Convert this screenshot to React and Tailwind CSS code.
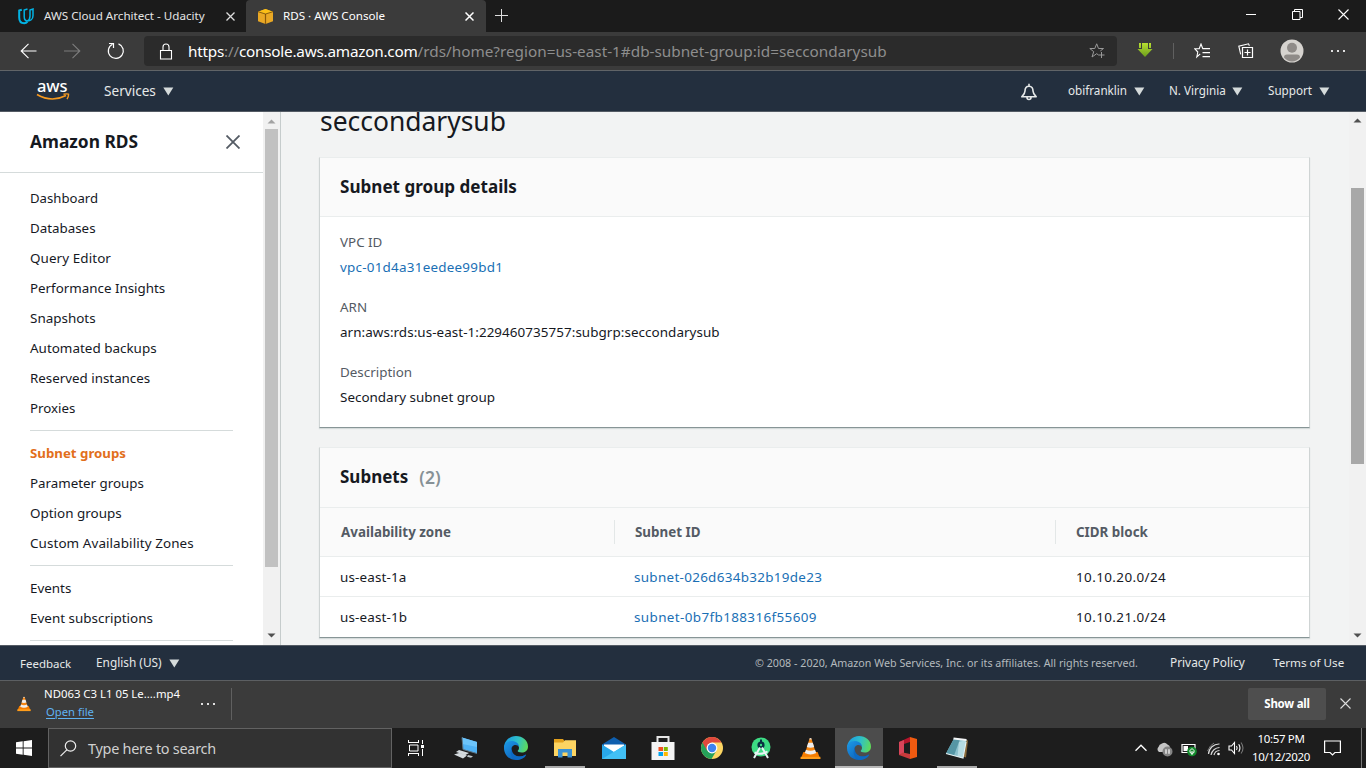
import React from 'react';

function Svg({ w, h, className = '', children }) {
  return (
    <svg width={w} height={h} viewBox={`0 0 ${w} ${h}`} fill="none" className={`block shrink-0 ${className}`}>
      {children}
    </svg>
  );
}

const Caret = ({ className = '' }) => (
  <Svg w={11} h={9} className={className}>
    <path d="M0.3 0.5h10L5.3 8.6z" fill="#d5dbdb" />
  </Svg>
);

const Cross = ({ s = 9, color = '#fff', sw = 1.3, className = '' }) => (
  <Svg w={s} h={s} className={className}>
    <path d={`M.5 .5L${s - 0.5} ${s - 0.5}M${s - 0.5} .5L.5 ${s - 0.5}`} stroke={color} strokeWidth={sw} />
  </Svg>
);

const Dots = ({ className = '' }) => (
  <Svg w={16} h={2} className={className}>
    <path d="M1 0h2v2H1zM7 0h2v2H7zM13 0h2v2h-2z" fill="#e0e0e0" />
  </Svg>
);

const Edge = ({ id }) => (
  <Svg w={26} h={26}>
    <defs>
      <linearGradient id={`${id}a`} x1="2" y1="6" x2="25" y2="13" gradientUnits="userSpaceOnUse">
        <stop offset="0" stopColor="#1b9de2" />
        <stop offset=".5" stopColor="#2fc0c8" />
        <stop offset="1" stopColor="#62dc52" />
      </linearGradient>
      <linearGradient id={`${id}b`} x1="3" y1="10" x2="16" y2="25" gradientUnits="userSpaceOnUse">
        <stop offset="0" stopColor="#1a8fdf" />
        <stop offset="1" stopColor="#0c5cb5" />
      </linearGradient>
    </defs>
    <path d="M1 13C1 6 6.500 1 13 1s12 4.500 12 10.500c0 4-3 6-6.300 6-2.700 0-4-.8-4-1.500 0-.7 1.300-1 1.300-3 0-2.500-2-4.500-5-4.500-4 0-8 1.500-10 4.500z" fill={`url(#${id}a)`} />
    <path d="M1 13c0-4 3.500-7 7.500-7 4.500 0 7.500 2.500 7.500 6-1-2-5-3-7 0-2.500 4 1 9.500 7 9.500 3 0 5-1 6.500-2C21 22.500 17.500 25 13 25 6.300 25 1 20 1 13z" fill={`url(#${id}b)`} />
    <path d="M9.500 11c-2.300 4.500 1 10.500 7 10.500 2.500 0 4.500-.8 6-1.800.5-.3.800 0 .5.600C21.500 23 18 25 14.500 25 8.500 24 5.500 18 9.500 11z" fill="#0d6ac4" />
  </Svg>
);

const Cone = ({ w = 22 }) => (
  <svg width={w} height={w * 1.08} viewBox="0 0 22 24" className="block shrink-0">
    <path d="M3.500 16h15l3 7.500H.5z" fill="#f57c00" />
    <path d="M.5 21h21v3H.5z" fill="#ff9d1b" />
    <path d="M10 1.500h2L17 18q-6 3-12 0z" fill="#f58511" />
    <path d="M8.600 6h4.800l1.500 4.500q-4 1.500-7.800 0zM6.200 13.500q4.800 2 9.600 0l1.200 3.500q-6 3-12 0z" fill="#eee" />
    <path d="M10 1.500q1-1 2 0l.4 1.200H9.700z" fill="#e5e5e5" />
  </svg>
);

function BrowserTabs() {
  return (
    <div className="flex h-8 bg-[#1b1b1b] text-[11.620px] leading-8 text-[#e4e4e4]">
      <div className="flex w-[246px] items-center">
        <Svg w={17} h={17} className="ml-[18px]">
          <path d="M3.800 1.800L1.200 2.500v7c0 3.500 2 5.700 5 5.700 1.500 0 2.500-.5 3.300-1.500" stroke="#02b3e4" strokeWidth="2" />
          <path d="M9.500 1L6.200 2v6.500c0 3 1.200 4.500 3.500 4.500s5.300-1.500 5.300-5.500V1l-3 1v6c0 2.500-.8 4-2.500 5" stroke="#02b3e4" strokeWidth="1.500" />
        </Svg>
        <span className="ml-[9px] w-[182px] whitespace-nowrap">AWS Cloud Architect - Udacity</span>
        <Cross color="#ddd" />
      </div>
      <div className="flex w-[240px] items-center rounded-t bg-[#3b3b3b] text-white">
        <Svg w={15} h={15} className="ml-[12px]">
          <path d="M0 2.700L7.500 0 15 2.700v9.600L7.500 15 0 12.300z" fill="#e9a825" />
          <path d="M0 2.700L7.500 0 15 2.700 7.500 5z" fill="#fbbf17" />
          <path d="M7.500 5v10" stroke="#8b5a0a" strokeWidth="1.200" />
          <path d="M0 2.700L7.500 5 15 2.700" stroke="#6d480d" strokeWidth=".8" />
        </Svg>
        <span className="ml-[10px] w-[182px] whitespace-nowrap">RDS · AWS Console</span>
        <Cross sw={1.5} />
      </div>
      <div className="flex w-[752px] items-center pb-px pl-[9px]">
        <Svg w={14} h={14}>
          <path d="M0 6.500h13M6.500 0v13" stroke="#ddd" />
        </Svg>
      </div>
      <div className="flex items-center pb-1">
        <Svg w={10} h={10} className="ml-[8px]">
          <path d="M0 5.500h10" stroke="#fff" />
        </Svg>
        <Svg w={11} h={11} className="ml-[36px]">
          <path d="M.5 2.500h7.500v8H.5zM2.500 2.500V.5h8v8H8" stroke="#fff" />
        </Svg>
        <Cross s={11} sw={1.1} className="ml-[35px]" />
      </div>
    </div>
  );
}

function Toolbar() {
  return (
    <div className="flex h-[38px] items-center bg-[#3b3b3b]">
      <Svg w={17} h={16} className="-mt-px ml-[20px]">
        <path d="M16.500 8H1M8.500.8L1.200 8l7.300 7.200" stroke="#fff" strokeWidth="1.100" />
      </Svg>
      <Svg w={17} h={16} className="-mt-px ml-[27px]">
        <path d="M0 8h15.500M8.500.8L15.800 8l-7.300 7.200" stroke="#7d7d7d" strokeWidth="1.100" />
      </Svg>
      <Svg w={18} h={18} className="ml-[26px]">
        <path d="M5.500 2.200A7.500 7.500 0 1 0 11.500 1.900" stroke="#fff" strokeWidth="1.200" />
        <path d="M2 1.500h4.500V6" stroke="#fff" strokeWidth="1.200" />
      </Svg>
      <div className="ml-[19px] flex h-[30px] w-[973px] items-center rounded bg-[#2b2b2b]">
        <Svg w={14} h={17} className="ml-[15px]">
          <path d="M1.500 7.500h11v8.500h-11zM4 7.500V4a3 3 0 0 1 6 0v3.500" stroke="#fff" strokeWidth="1.100" />
        </Svg>
        <div className="ml-[15px] flex w-[901px] whitespace-nowrap text-[15.300px] text-[#8e8e8e]">
          <span className="tracking-[-0.230px] text-white">
            https<span className="text-[#8e8e8e]">://</span>console.aws.amazon.com
          </span>
          <span>/rds/home?region=us-east-1#db-subnet-group:id=seccondarysub</span>
        </div>
        <Svg w={17} h={16}>
          <path d="M9.500 12L7.700 10.700 3 14l1.700-5.300L.8 5.500h5L7.700.8l1.800 4.700h5L11.300 8" stroke="#999" />
          <path d="M12.500 9v6M9.500 12h6" stroke="#999" />
        </Svg>
      </div>
      <Svg w={16} h={17} className="ml-[20px] -mt-[1px]">
        <defs>
          <linearGradient id="dl" x1="0" y1="0" x2="0" y2="1">
            <stop offset="0" stopColor="#b8df32" />
            <stop offset="1" stopColor="#6b9d1c" />
          </linearGradient>
        </defs>
        <path d="M2 1h2v5H2zM5 1h6v6h4.500L8 15 .5 7H5zM12 1h2v5h-2z" fill="url(#dl)" />
      </Svg>
      <div className="ml-[20px] h-4 w-px bg-[#606060]" />
      <Svg w={16} h={16} className="ml-[20px]">
        <path d="M6.200 10.800L2.800 14l1-5L.7 5.700h4.500L7 1l1.800 4.700" stroke="#fff" strokeWidth="1.100" />
        <path d="M8.500 5.600H16M8.500 9.600H16M8.500 13.600H16" stroke="#fff" strokeWidth="1.100" />
      </Svg>
      <Svg w={16} h={16} className="ml-[28px]">
        <path d="M4.500 4.500h10v10h-10zM9.500 6.500v6M6.500 9.500h6" stroke="#fff" strokeWidth="1.200" />
        <path d="M2.700 11.300L.8 3.200 10.500.8l.9 2" stroke="#fff" strokeWidth="1.100" />
      </Svg>
      <Svg w={24} h={24} className="ml-[26px]">
        <circle cx="12" cy="12" r="11.500" fill="#d6d3cf" />
        <circle cx="12" cy="8.800" r="5" fill="#8f8b88" />
        <path d="M4 18.500q0-3 3-3h10q3 0 3 3-3.500 4-8 4t-8-4z" fill="#8f8b88" />
      </Svg>
      <Dots className="ml-[26px]" />
    </div>
  );
}

function AwsNav() {
  return (
    <div className="flex h-[42px] items-center border-t border-b border-t-[#606467] border-b-[#545b64] bg-[#232f3e] text-[11.680px] text-[#e6e9e9]">
      <div className="ml-[36px] flex w-[68px] flex-col">
        <span className="ml-[1px] h-[12px] text-[16.500px] leading-[9px] font-medium tracking-[-0.100px] text-white">aws</span>
        <Svg w={34} h={8}>
          <path d="M1 1.500q14.500 8.500 29 1" stroke="#f79a20" strokeWidth="1.700" />
          <path d="M27.500 1.300q3-.8 5-.2.300 2.500-1.500 5" stroke="#f79a20" strokeWidth="1.400" />
        </Svg>
      </div>
      <span className="w-[59px] text-[13.600px]">Services</span>
      <Caret />
      <Svg w={18} h={18} className="ml-[846px] mt-[2px]">
        <path d="M9 3.200C6 3.200 5 5.500 5 8c0 2.500-1.500 4-3.200 5.800h14.400C14.500 12 13 10.500 13 8c0-2.500-1-4.800-4-4.800zM9 3V.8M7 14.500q0 2 2 2t2-2" stroke="#e6e9e9" strokeWidth="1.600" strokeLinejoin="round" />
      </Svg>
      <span className="ml-[30px] w-[66px]">obifranklin</span>
      <Caret />
      <span className="ml-[24px] w-[63px]">N. Virginia</span>
      <Caret />
      <span className="ml-[25px] w-[51px]">Support</span>
      <Caret />
    </div>
  );
}

const nav = [
  ['Dashboard', 'text-[13.150px]'],
  ['Databases', 'text-[13.350px]'],
  ['Query Editor', 'text-[13.450px] tracking-[0.080px]'],
  ['Performance Insights', 'text-[13.350px]'],
  ['Snapshots', 'text-[13.450px]'],
  ['Automated backups', 'text-[13.450px]'],
  ['Reserved instances', 'text-[13.350px]'],
  ['Proxies', 'text-[13.300px]'],
  null,
  ['Subnet groups', 'text-[13.260px] font-bold text-[#e26f1c]'],
  ['Parameter groups', 'text-[13.330px]'],
  ['Option groups', 'text-[13.450px]'],
  ['Custom Availability Zones', 'text-[13.450px] tracking-[0.080px]'],
  null,
  ['Events', 'text-[13.400px]'],
  ['Event subscriptions', 'text-[13.450px]'],
  null,
];

function ScrollArrow({ up, color = '#505050' }) {
  return (
    <Svg w={9} h={5}>
      <path d={up ? 'M.5 4.500L4.500 .5l4 4z' : 'M.5 .5h8l-4 4z'} fill={color} />
    </Svg>
  );
}

function Sidebar() {
  return (
    <div className="flex w-[281px] shrink-0 border-r border-[#c6cccc] bg-white">
      <div className="w-[263px] overflow-hidden">
        <div className="flex h-[61px] items-center border-b border-[#d5dbdb] pl-[30px]">
          <span className="w-[196px] text-[17.330px] font-bold">Amazon RDS</span>
          <Cross s={14} color="#545b64" sw={1.8} />
        </div>
        <div className="pt-[10px] pl-[30px]">
          {nav.map((n, i) =>
            n ? (
              <div key={i} className={`h-[30px] leading-[30px] ${n[1]}`}>
                {n[0]}
              </div>
            ) : (
              <div key={i} className="my-[7px] h-px w-[203px] bg-[#d5dbdb]" />
            )
          )}
        </div>
      </div>
      <div className="flex w-[17px] flex-col items-center justify-between bg-[#f1f1f1] pb-[7px]">
        <div className="flex flex-col items-center gap-[5px] pt-[7px]">
          <ScrollArrow up color="#a3a3a3" />
          <div className="h-[438px] w-[13px] bg-[#c1c1c1]" />
        </div>
        <ScrollArrow />
      </div>
    </div>
  );
}

const card = 'w-[991px] border border-t-[#eaeded] border-r-[#cfd4d4] border-b-[#879596] border-l-[#cfd4d4] bg-white shadow-[0_1px_1px_#d5dbdb]';

function Details() {
  const items = [
    ['VPC ID', 'vpc-01d4a31eedee99bd1', 'text-[13.450px] tracking-[0.230px] text-[#1a6fb5]'],
    ['ARN', 'arn:aws:rds:us-east-1:229460735757:subgrp:seccondarysub', 'text-[13.450px] tracking-[0.050px]'],
    ['Description', 'Secondary subnet group', 'text-[13.440px]'],
  ];
  return (
    <div className={`${card} h-[271px]`}>
      <div className="h-[59px] border-b border-[#eaeded] bg-[#fafafa] pl-5 text-[17.080px] leading-[58px] font-bold">Subnet group details</div>
      <div className="flex flex-col gap-[15px] pt-[12px] pl-5">
        {items.map(([k, v, c]) => (
          <div key={k} className="flex h-[50px] flex-col">
            <span className="text-[13.400px] leading-[26px] text-[#545b64]">{k}</span>
            <span className={`leading-[24px] ${c}`}>{v}</span>
          </div>
        ))}
      </div>
    </div>
  );
}

function Subnets() {
  const rows = [
    ['us-east-1a', 'subnet-026d634b32b19de23', '10.10.20.0/24'],
    ['us-east-1b', 'subnet-0b7fb188316f55609', '10.10.21.0/24'],
  ];
  return (
    <div className={`${card} h-[191px]`}>
      <div className="flex h-[60px] gap-[11px] border-b border-[#eaeded] bg-[#fafafa] pl-5 text-[17px] leading-[58px] font-bold">
        <span>Subnets</span>
        <span className="text-[17.500px] font-semibold text-[#879196]">(2)</span>
      </div>
      <div className="flex h-[49px] items-center border-b border-[#eaeded] bg-[#fafafa] text-[13.380px] font-bold text-[#545b64]">
        <div className="w-[295px] border-r border-[#e3e7e7] pl-[21px] leading-6">Availability zone</div>
        <div className="w-[441px] border-r border-[#e3e7e7] pl-5 leading-6">Subnet ID</div>
        <div className="pl-5">CIDR block</div>
      </div>
      {rows.map((r, i) => (
        <div key={r[0]} className={i ? 'flex h-10 leading-[40px]' : 'flex h-10 border-b border-[#eaeded] leading-[40px]'}>
          <span className="w-[294px] pl-5 text-[13.450px] tracking-[0.150px]">{r[0]}</span>
          <span className={i ? 'w-[442px] pl-5 text-[13.450px] tracking-[0.380px] text-[#1a6fb5]' : 'w-[442px] pl-5 text-[13.450px] tracking-[0.300px] text-[#1a6fb5]'}>{r[1]}</span>
          <span className="pl-5 text-[13.450px] tracking-[0.400px]">{r[2]}</span>
        </div>
      ))}
    </div>
  );
}

function ConsoleFooter() {
  return (
    <div className="flex h-9 items-center border-t border-b border-t-[#545b64] border-b-[#5c5f62] bg-[#232f3e] text-[11.850px] whitespace-nowrap text-[#e6e9e9]">
      <span className="ml-5 w-[76px] pt-px text-[11.480px]">Feedback</span>
      <span className="w-[73px]">English (US)</span>
      <Caret />
      <span className="ml-[575px] w-[415px] text-[10.730px] text-[#b4babd]">
        © 2008 - 2020, Amazon Web Services, Inc. or its affiliates. All rights reserved.
      </span>
      <span className="w-[103px]">Privacy Policy</span>
      <span className="text-[11.650px]">Terms of Use</span>
    </div>
  );
}

function Downloads() {
  return (
    <div className="flex h-[47px] items-center bg-[#3b3b3b] pb-[2px] text-white">
      <div className="ml-[17px] flex w-[27px] items-center pt-px">
        <Cone w={14} />
      </div>
      <div className="flex w-[156px] flex-col pb-[2px] whitespace-nowrap">
        <span className="text-[11.370px] leading-[18px]">ND063 C3 L1 05 Le....mp4</span>
        <span className="ml-[2px] text-[11.260px] leading-[18px] text-[#5fb2f2] underline underline-offset-2">Open file</span>
      </div>
      <Dots />
      <div className="ml-[15px] h-8 w-px bg-[#606060]" />
      <div className="ml-[1016px] h-8 w-[78px] rounded-[2px] bg-[#4e4e4e] text-center text-[11.500px] leading-8 font-bold tracking-[-0.250px]">Show all</div>
      <Cross s={11} color="#ddd" sw={1.1} className="ml-[14px]" />
    </div>
  );
}

const apps = [
  { icon: (
    <Svg w={26} h={26}>
      <path d="M8 2.500l15 4.500v11.500L9 14.500z" fill="#4fb2f5" />
      <path d="M8 2.500l15 4.500v5L8.500 9z" fill="#6cc4fb" />
      <path d="M8 2.500L9 14.500l14 4" stroke="#5c7384" />
      <path d="M5 15l10 3-3.500 2L2 17zM0 19.500l5-1.500 8 2.500-4 3z" fill="#d4dade" />
      <path d="M14 20l5 1.300-2 1.500-4-1z" fill="#bac3c8" />
    </Svg>
  ) },
  { icon: <Edge id="e1" /> },
  { bar: 'w-10 bg-[#aaa]', icon: (
    <Svg w={22} h={20}>
      <path d="M0 1h9l1.500 2H22v15H0z" fill="#e2a01c" />
      <path d="M0 4.500h9l2-2.300h11V18H0z" fill="#fcd462" />
      <path d="M4 19.500V11h14v8.500h-4.500v-5h-5v5z" fill="#3a92d4" />
    </Svg>
  ) },
  { icon: (
    <Svg w={24} h={24}>
      <path d="M0 8.500L12 1l12 7.500v14H0z" fill="#0f5fae" />
      <path d="M2 8.500h20V17H2z" fill="#fff" />
      <path d="M0 8.500L12 16l12-7.500v14.500H0z" fill="#28a8ea" />
      <path d="M0 23L24 8.500V23z" fill="#42c0f5" />
    </Svg>
  ) },
  { icon: (
    <Svg w={24} h={26}>
      <path d="M6.500 9V2h11v7" stroke="#e6e6e6" strokeWidth="2" />
      <path d="M.5 7h23v18h-23z" fill="#f4f4f4" />
      <path d="M7.500 12H12v4H7.500z" fill="#f25022" />
      <path d="M12.800 12h4v4h-4z" fill="#7fba00" />
      <path d="M7.500 17H12v4H7.500z" fill="#00a4ef" />
      <path d="M12.800 17h4v4h-4z" fill="#ffb900" />
    </Svg>
  ) },
  { icon: (
    <Svg w={24} h={24}>
      <circle cx="12" cy="12" r="11" fill="#fdd663" />
      <path d="M12 12L2.500 6.500A11 11 0 0 0 11.500 23l5-8.500z" fill="#25a25a" />
      <path d="M2.500 6.500A11 11 0 0 1 21.500 6.500H12L7.200 14.800z" fill="#e0483c" />
      <circle cx="12" cy="12" r="5.400" fill="#fff" />
      <circle cx="12" cy="12" r="4.200" fill="#3f83f0" />
    </Svg>
  ) },
  { icon: (
    <Svg w={22} h={24}>
      <circle cx="11" cy="11" r="9.500" fill="#3ddc84" />
      <circle cx="11" cy="9" r="3.600" fill="#083042" />
      <path d="M11 3.500V10" stroke="#083042" strokeWidth="2" />
      <circle cx="11" cy="9" r="1.200" fill="#3ddc84" />
      <path d="M10 11.500L4 22M12 11.500L18 22M4.500 16.500q6.500 3 13-1" stroke="#e8f4f4" strokeWidth="2" />
    </Svg>
  ) },
  { icon: <Cone w={21} /> },
  { active: true, bar: 'w-12 bg-[#b8b8b8]', icon: <Edge id="e2" /> },
  { icon: (
    <Svg w={18} h={24}>
      <path d="M0 6L11 1v5L5 8v9l-5 2z" fill="#b5152b" />
      <path d="M0 6l5-2v13l-5 2z" fill="#d8455a" />
      <path d="M0 19l4-2.500 7 1.500v5z" fill="#c93a3c" />
      <path d="M11 1l7 2v18l-7 2z" fill="#f05a10" />
    </Svg>
  ) },
  { bar: 'w-10 bg-[#aaa]', icon: (
    <Svg w={24} h={24}>
      <path d="M19 3.500l4 1-2 17-3-1z" fill="#8a6a3a" />
      <path d="M9 2.500L21.500 4 18 22 1 17.500z" fill="#8ac0cc" />
      <path d="M9 2.500l6 .8L9 19.600l-8-2.100z" fill="#5596a5" />
      <path d="M14 6l7-2-3.500 18-5-1.500z" fill="#b5dbe2" />
      <path d="M8.500 2.500l13 1.500" stroke="#f4f6f7" strokeWidth="2" />
      <path d="M1 17.500L18 22l3-16" stroke="#e4f1f3" strokeWidth="1.200" />
    </Svg>
  ) },
];

function Taskbar() {
  return (
    <div className="flex h-10 bg-[#1d1d1d] text-white">
      <div className="flex w-12 items-center justify-center">
        <Svg w={16} h={16}>
          <path d="M0 2.300L6.700 1.300v6.200H0zM7.600 1.200L16 0v7.500H7.600zM0 8.500h6.700v6.200L0 13.700zM7.600 8.500H16V16l-8.400-1.200z" fill="#fff" />
        </Svg>
      </div>
      <div className="flex w-[344px] items-center border border-[#626262] bg-[#323232] pl-[11px]">
        <Svg w={17} h={17}>
          <circle cx="10.500" cy="6" r="5.200" stroke="#eee" strokeWidth="1.200" />
          <path d="M6.800 9.800L.5 16.200" stroke="#eee" strokeWidth="1.200" />
        </Svg>
        <span className="ml-[11px] pt-px text-[14.450px] tracking-[-0.260px] text-[#d0d0d0]">Type here to search</span>
      </div>
      <div className="flex w-[51px] items-center pl-[16px]">
        <Svg w={16} h={16}>
          <path d="M.5 0v3M10.500 0v3M.5 13v3M10.500 13v3M0 2.500h11M0 13.500h11M1.500 5h8.500v6H1.500zM14.500 0v4M14.500 9v7" stroke="#fff" />
          <path d="M13 5h3v3h-3z" fill="#fff" />
        </Svg>
      </div>
      <div className="flex gap-px">
        {apps.map((a, i) => (
          <div key={i} className={a.active ? 'flex w-12 flex-col items-center bg-[#4c4c4c]' : 'flex w-12 flex-col items-center'}>
            <div className="flex h-[38px] items-center pt-[2px]">{a.icon}</div>
            {a.bar && <div className={`h-[2px] ${a.bar}`} />}
          </div>
        ))}
      </div>
      <div className="ml-[154px] flex items-center">
        <Svg w={12} h={8}>
          <path d="M.5 6.700L6 1.200l5.500 5.500" stroke="#fff" strokeWidth="1.300" />
        </Svg>
        <Svg w={17} h={15} className="ml-[9px] mt-[2px]">
          <path d="M2.500 9.500A3 3 0 0 1 2.500 5 4.500 4.500 0 0 1 6 1.500 4.500 4.500 0 0 1 11.500 2.500 3.500 3.500 0 0 1 14 6v4H3z" fill="#c6c6c6" />
          <circle cx="11.500" cy="9.500" r="5" fill="#858585" />
          <path d="M10 7.200v4.500M13 7.200v4.500" stroke="#fff" strokeWidth="1.200" />
        </Svg>
        <Svg w={17} h={15} className="ml-[8px] mt-[2px]">
          <path d="M1 2.500h13v8H1z" stroke="#fff" strokeWidth="1.200" />
          <path d="M2.500 4H7v5H2.500z" fill="#fff" />
          <circle cx="11" cy="9.500" r="4.800" fill="#12892b" />
          <path d="M11 6.500q3 2 2 4l-2 1-2-1q-1-2 2-4zM11 9v4" stroke="#fff" />
        </Svg>
        <Svg w={14} h={14} className="ml-[9px] mt-[2px]">
          <path d="M1.500 12A10.500 10.500 0 0 1 12.500 2M4 13a9 9 0 0 1 8.500-7.500M7 13a6 6 0 0 1 5.500-4.500" stroke="#d9d9d9" strokeWidth="1.200" />
          <circle cx="11.500" cy="12" r="1.300" fill="#fff" />
          <path d="M.5 9Q3 3 7 1" stroke="#777" />
        </Svg>
        <Svg w={17} h={14} className="ml-[7px]">
          <path d="M1 5h2.500L6.500 1.500v11L3.500 9H1z" stroke="#fff" strokeWidth="1.100" />
          <path d="M8.500 5q1.300 2 0 4M10.700 3.300q2.500 3.700 0 7.400" stroke="#fff" strokeWidth="1.100" />
          <path d="M13 1.500q4 5.500 0 11" stroke="#777" strokeWidth="1.100" />
        </Svg>
        <div className="ml-[6px] flex w-[60px] flex-col items-center text-[11.500px] leading-[18px] tracking-[-0.320px] whitespace-nowrap">
          <span>10:57 PM</span>
          <span>10/12/2020</span>
        </div>
        <Svg w={17} h={16} className="ml-[13px]">
          <path d="M.6 1h15.800v11.500h-5.500L8.500 15 6.100 12.500H.6z" stroke="#fff" strokeWidth="1.200" />
        </Svg>
        <div className="ml-[20px] h-10 w-px bg-[#777]" />
      </div>
    </div>
  );
}

export default function App() {
  return (
    <div className="flex h-[768px] w-[1366px] flex-col overflow-hidden font-['Noto_Sans',sans-serif] text-[#16191f]">
      <BrowserTabs />
      <Toolbar />
      <AwsNav />
      <div className="flex h-[533px] overflow-hidden">
        <Sidebar />
        <div className="h-[533px] w-[1068px] overflow-hidden bg-[#f2f3f3] pl-[38px]">
          <div className="-mt-[11px] mb-[16px] h-10 pl-px text-[26.430px] leading-10">seccondarysub</div>
          <Details />
          <div className="h-[19px]" />
          <Subnets />
        </div>
        <div className="flex w-[17px] flex-col items-center justify-between bg-[#f1f1f1] pt-[6px] pb-[7px]">
          <div className="flex flex-col items-center gap-[65px]">
            <ScrollArrow up />
            <div className="h-[276px] w-[13px] bg-[#a8a8a8]" />
          </div>
          <ScrollArrow />
        </div>
      </div>
      <ConsoleFooter />
      <Downloads />
      <Taskbar />
    </div>
  );
}
